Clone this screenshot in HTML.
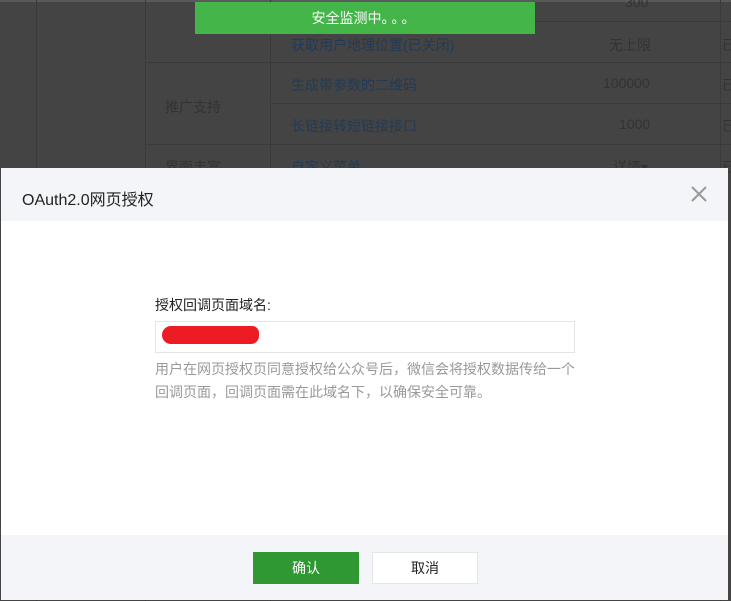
<!DOCTYPE html>
<html><head><meta charset="utf-8"><style>
*{margin:0;padding:0;box-sizing:border-box}
body{width:731px;height:601px;overflow:hidden;background:#444;font-family:"Liberation Sans","Noto Sans CJK SC",sans-serif;position:relative;font-size:14px}
.a{position:absolute}
.vl{position:absolute;top:0;width:1px;background:#3a3a3a;height:601px}
.hl{position:absolute;height:1px;background:#3a3a3a}
.t{position:absolute;color:#333;font-size:14px;white-space:nowrap}
.lk{color:#233a55}
</style></head><body>
<div class="a" style="left:0;top:0;width:731px;height:2px;background:#5a5a5a"></div>
<div class="vl" style="left:36px"></div>
<div class="vl" style="left:145px"></div>
<div class="vl" style="left:270px"></div>
<div class="vl" style="left:720px"></div>
<div class="hl" style="left:270px;top:21px;width:461px"></div>
<div class="hl" style="left:145px;top:62px;width:586px"></div>
<div class="hl" style="left:270px;top:103px;width:461px"></div>
<div class="hl" style="left:145px;top:144px;width:586px"></div>
<div class="t" style="left:625px;top:-6px">300</div>
<div class="t lk" style="left:291px;top:35px">获取用户地理位置(已关闭)</div>
<div class="t" style="left:609px;top:35px">无上限</div>
<div class="t" style="left:722px;top:35px">已</div>
<div class="t" style="left:165px;top:97px">推广支持</div>
<div class="t lk" style="left:291px;top:75px">生成带参数的二维码</div>
<div class="t" style="left:603px;top:75px">100000</div>
<div class="t" style="left:722px;top:75px">已</div>
<div class="t lk" style="left:291px;top:116px">长链接转短链接接口</div>
<div class="t" style="left:619px;top:116px">1000</div>
<div class="t" style="left:722px;top:116px">已</div>
<div class="t" style="left:165px;top:157px">界面丰富</div>
<div class="t lk" style="left:291px;top:157px">自定义菜单</div>
<div class="t" style="left:613px;top:157px">详情▾</div>
<div class="t" style="left:722px;top:157px">已</div>
<div class="a" style="left:195px;top:2px;width:340px;height:32px;background:#44b549;color:#fff;text-align:center;line-height:32px;font-size:14px">安全监测中<span style="letter-spacing:3px">。。。</span></div>

<div class="a" style="left:1px;top:168px;width:727px;height:432px;background:#fff">
 <div class="a" style="left:0;top:0;width:727px;height:53px;background:#f4f5f9"></div>
 <div class="t" style="left:21px;top:18px;font-size:16px;color:#222">OAuth2.0网页授权</div>
 <svg class="a" style="left:690px;top:18px" width="16" height="16" viewBox="0 0 16 16"><path d="M1 1L15 15M15 1L1 15" stroke="#999" stroke-width="2"/></svg>
 <div class="t" style="left:154px;top:127px;color:#222">授权回调页面域名:</div>
 <div class="a" style="left:154px;top:153px;width:420px;height:32px;border:1px solid #e4e4e4"></div>
 <div class="a" style="left:161px;top:158px;width:97px;height:18px;background:#ed1c24;border-radius:9px 7px 8px 9px"></div>
 <div class="t" style="left:154px;top:190px;color:#999;line-height:23px;white-space:normal;width:430px">用户在网页授权页同意授权给公众号后，微信会将授权数据传给一个回调页面，回调页面需在此域名下，以确保安全可靠。</div>
 <div class="a" style="left:0;top:367px;width:727px;height:65px;background:#f4f5f9"></div>
 <div class="a" style="left:252px;top:384px;width:106px;height:32px;background:#2f9833;color:#fff;text-align:center;line-height:32px">确认</div>
 <div class="a" style="left:371px;top:384px;width:106px;height:32px;background:#fff;border:1px solid #e4e6ea;color:#222;text-align:center;line-height:31px">取消</div>
</div>
</body></html>
